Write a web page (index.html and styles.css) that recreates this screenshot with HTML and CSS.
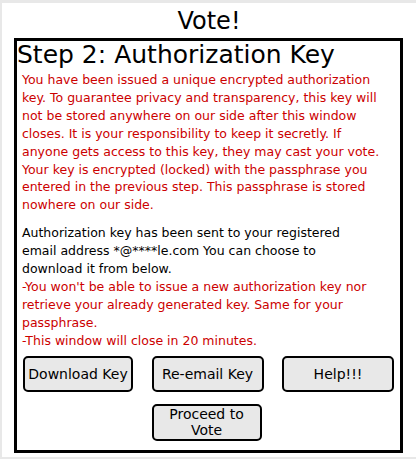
FILE: index.html
```html
<!DOCTYPE html>
<html>
<head>
<meta charset="utf-8">
<link rel="stylesheet" href="styles.css">
</head>
<body>
<div class="page">
  <h1 class="title">Vote!</h1>
  <div class="box">
    <h2 class="step">Step 2: Authorization Key</h2>
    <p class="warn">You have been issued a unique encrypted authorization key. To guarantee privacy and transparency, this key will not be stored anywhere on our side after this window closes. It is your responsibility to keep it secretly. If anyone gets access to this key, they may cast your vote. Your key is encrypted (locked) with the passphrase you entered in the previous step. This passphrase is stored nowhere on our side.</p>
    <p class="info">Authorization key has been sent to your registered email address *@****le.com You can choose to download it from below.</p>
    <p class="note">-You won't be able to issue a new authorization key nor retrieve your already generated key. Same for your passphrase.</p>
    <p class="note">-This window will close in 20 minutes.</p>
    <div class="actions">
      <button class="btn">Download Key</button>
      <button class="btn">Re-email Key</button>
      <button class="btn">Help!!!</button>
    </div>
    <div class="proceed">
      <button class="btn btn-proceed">Proceed to Vote</button>
    </div>
  </div>
</div>
</body>
</html>
```
FILE: styles.css
```css
html, body {
  margin: 0;
  padding: 0;
}
body {
  background: #e8e8e8;
  padding: 3px 0 2px 2px;
  font-family: "DejaVu Sans", sans-serif;
}
.page {
  background: #fff;
  height: 454px;
  padding-top: 1px;
  box-sizing: border-box;
}
.title {
  margin: 0;
  height: 34px;
  text-align: center;
  font-size: 24px;
  font-weight: normal;
  line-height: 34px;
  color: #000;
}
.box {
  margin-left: 12px;
  width: 389px;
  height: 415px;
  box-sizing: border-box;
  border: 3px solid #000;
}
.step {
  margin: 0;
  font-size: 25px;
  font-weight: normal;
  line-height: 28px;
  color: #000;
}
.warn, .info, .note {
  margin: 0;
  padding: 0 11px 0 5px;
  font-size: 12.5px;
  line-height: 17.9px;
}
.warn {
  color: #cc0000;
  margin-top: 2px;
  margin-bottom: 10px;
}
.info {
  color: #000;
  padding-right: 22px;
}
.note {
  color: #cc0000;
}
.actions {
  display: grid;
  grid-template-columns: 110px 112px 112px;
  justify-content: space-between;
  padding: 0 6px 0 6px;
  margin-top: 6px;
}
.btn {
  font-family: inherit;
  font-size: 14px;
  color: #000;
  background: #e8e8e8;
  border: 2px solid #000;
  border-radius: 5px;
  height: 36px;
  padding: 0;
}
.proceed {
  display: flex;
  justify-content: center;
  margin-top: 12px;
  padding-right: 4px;
}
.btn-proceed {
  width: 110px;
  height: 37px;
  line-height: 16px;
  padding: 0 10px;
}
```
